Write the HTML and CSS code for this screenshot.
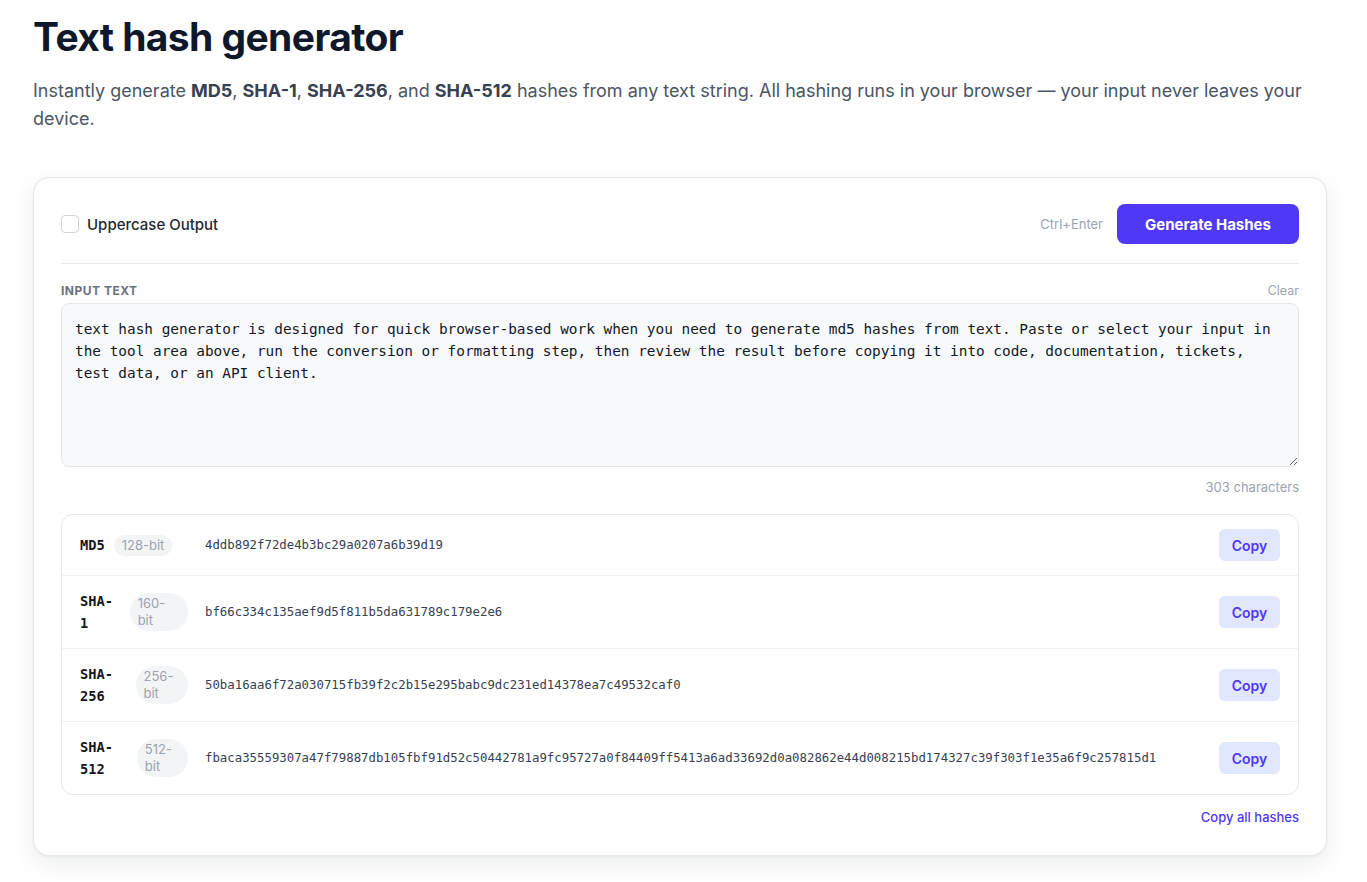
FILE: index.html
```html
<!DOCTYPE html>
<html lang="en">
<head>
  <meta charset="UTF-8" />
  <meta name="viewport" content="width=device-width, initial-scale=1.0" />
  <title>Text hash generator</title>
  <link rel="stylesheet" href="styles.css">
</head>
<body>

  <div class="page">
    <h1 class="title">Text hash generator</h1>
    <p class="lead">Instantly generate <b>MD5</b>, <b>SHA-1</b>, <b>SHA-256</b>, and <b>SHA-512</b> hashes from any text string. All hashing runs in your browser — your input never leaves your device.</p>

    <div class="card">
      <div class="toolbar">
        <label class="check">
          <span class="check-box"></span>
          <span>Uppercase Output</span>
        </label>
        <div class="actions">
          <span class="hint">Ctrl+Enter</span>
          <button class="primary-btn">Generate Hashes</button>
        </div>
      </div>

      <div class="field-head">
        <span class="field-label">Input text</span>
        <span class="link-muted">Clear</span>
      </div>
      <textarea class="input" spellcheck="false">text hash generator is designed for quick browser-based work when you need to generate md5 hashes from text. Paste or select your input in the tool area above, run the conversion or formatting step, then review the result before copying it into code, documentation, tickets, test data, or an API client.</textarea>
      <div class="counter">303 characters</div>

      <div class="hash-list">
        <div class="hash-row">
          <div class="hash-label"><span class="hash-name">MD5</span><span class="badge">128-bit</span></div>
          <div class="hash-value">4ddb892f72de4b3bc29a0207a6b39d19</div>
          <button class="copy-btn">Copy</button>
        </div>
        <div class="hash-row">
          <div class="hash-label"><span class="hash-name">SHA-1</span><span class="badge">160-bit</span></div>
          <div class="hash-value">bf66c334c135aef9d5f811b5da631789c179e2e6</div>
          <button class="copy-btn">Copy</button>
        </div>
        <div class="hash-row">
          <div class="hash-label"><span class="hash-name">SHA-256</span><span class="badge">256-bit</span></div>
          <div class="hash-value">50ba16aa6f72a030715fb39f2c2b15e295babc9dc231ed14378ea7c49532caf0</div>
          <button class="copy-btn">Copy</button>
        </div>
        <div class="hash-row">
          <div class="hash-label"><span class="hash-name">SHA-512</span><span class="badge">512-bit</span></div>
          <div class="hash-value">fbaca35559307a47f79887db105fbf91d52c50442781a9fc95727a0f84409ff5413a6ad33692d0a082862e44d008215bd174327c39f303f1e35a6f9c257815d1</div>
          <button class="copy-btn">Copy</button>
        </div>
      </div>

      <div class="foot">
        <span class="link-accent">Copy all hashes</span>
      </div>
    </div>
  </div>

</body>
</html>
```

FILE: styles.css
```css
* {
  margin: 0;
  padding: 0;
  box-sizing: border-box;
}

body {
  font-family: Inter, "Noto Sans", sans-serif;
  background: #ffffff;
  color: #111827;
}

.page {
  padding: 12px 40px 40px 33px;
}

.title {
  font-size: 39px;
  line-height: 50px;
  font-weight: 700;
  letter-spacing: -0.6px;
  color: #0f172a;
}

.lead {
  margin-top: 15px;
  font-size: 18px;
  line-height: 28px;
  color: #4b5563;
}

.lead b {
  color: #374151;
  font-weight: 700;
}

.card {
  margin-top: 44px;
  border: 1px solid #e5e7eb;
  border-radius: 16px;
  background: #fff;
  box-shadow: 0 8px 24px rgba(15, 23, 42, 0.08), 0 1px 3px rgba(15, 23, 42, 0.05);
  padding: 26px 27px 29px 27px;
}

.toolbar {
  display: flex;
  align-items: center;
  justify-content: space-between;
  padding-bottom: 19px;
  border-bottom: 1px solid #e5e7eb;
}

.check {
  display: flex;
  align-items: center;
  gap: 8px;
  font-size: 15px;
  font-weight: 500;
  color: #1f2937;
}

.check-box {
  width: 18px;
  height: 18px;
  border: 1px solid #d1d5db;
  border-radius: 4px;
  background: #fff;
}

.actions {
  display: flex;
  align-items: center;
  gap: 14px;
}

.hint {
  font-size: 13px;
  color: #9ca3af;
}

.primary-btn {
  font-family: inherit;
  height: 40px;
  width: 182px;
  border: none;
  border-radius: 8px;
  background: #4f39f6;
  color: #fff;
  font-size: 15px;
  font-weight: 700;
}

.field-head {
  display: flex;
  justify-content: space-between;
  align-items: center;
  margin-top: 18px;
  height: 16px;
}

.field-label {
  font-size: 12px;
  font-weight: 700;
  letter-spacing: 0.5px;
  text-transform: uppercase;
  color: #6b7280;
}

.link-muted {
  font-size: 12.5px;
  color: #9ca3af;
}

.input {
  display: block;
  width: 100%;
  height: 164px;
  margin-top: 5px;
  padding: 14px 13px;
  border: 1px solid #e5e7eb;
  border-radius: 8px;
  background: #f8f9fb;
  font-family: "DejaVu Sans Mono", "Liberation Mono", monospace;
  font-size: 14.4px;
  line-height: 22px;
  color: #111827;
  resize: vertical;
  outline: none;
}

.counter {
  margin-top: 12px;
  text-align: right;
  font-size: 13px;
  color: #9ca3af;
}

.hash-list {
  margin-top: 19px;
  border: 1px solid #e5e7eb;
  border-radius: 12px;
}

.hash-row {
  display: flex;
  align-items: center;
  gap: 17px;
  padding: 14px 18px;
  border-top: 1px solid #f0f1f3;
}

.hash-row:first-child {
  border-top: none;
}

.hash-label {
  display: flex;
  align-items: center;
  gap: 9px;
  width: 108px;
  flex-shrink: 0;
}

.hash-name {
  font-family: "DejaVu Sans Mono", monospace;
  font-size: 13.7px;
  line-height: 22px;
  font-weight: 700;
  color: #111827;
}

.badge {
  padding: 2px 8px;
  border-radius: 999px;
  background: #f3f4f6;
  color: #9ca3af;
  font-size: 13px;
  line-height: 17px;
}

.hash-value {
  flex: 1;
  font-family: "DejaVu Sans Mono", monospace;
  font-size: 12.35px;
  color: #374151;
  white-space: nowrap;
}

.copy-btn {
  font-family: inherit;
  width: 61px;
  height: 32px;
  border: none;
  border-radius: 6px;
  background: #e0e7ff;
  color: #4f39f6;
  font-size: 14px;
  font-weight: 600;
}

.foot {
  margin-top: 11px;
  text-align: right;
}

.link-accent {
  font-size: 13px;
  font-weight: 500;
  color: #4f39f6;
}
```
